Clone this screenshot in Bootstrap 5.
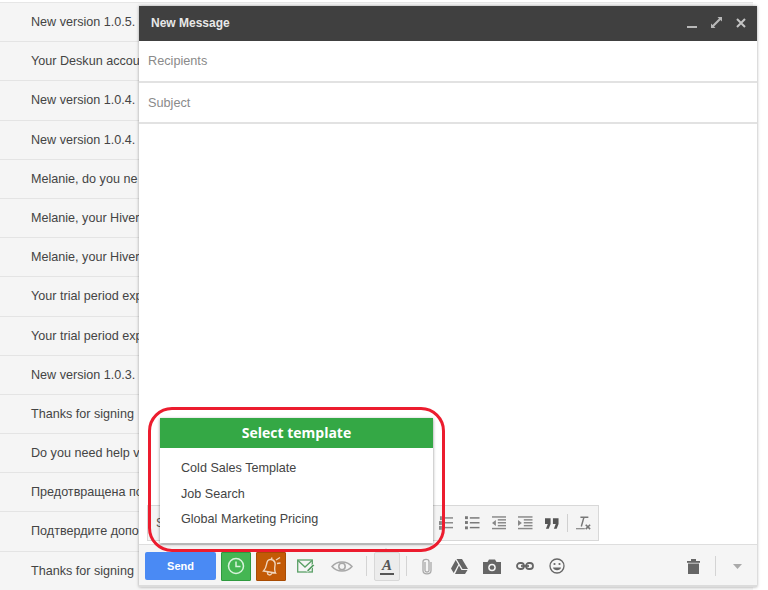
<!DOCTYPE html>
<html lang="en">
<head>
<meta charset="UTF-8">
<meta name="viewport" content="width=device-width, initial-scale=1">
<title>New Message</title>
<link href="https://cdn.jsdelivr.net/npm/bootstrap@5.3.0/dist/css/bootstrap.min.css" rel="stylesheet">
<style>
html, body { height: 590px; overflow: hidden; }
body { background: #fff; font-family: "Liberation Sans", Arial, sans-serif; font-size: 12.6px; color: #444; position: relative; }
.mail-list { width: 753px; border-top: 1px solid #e6e6e6; margin-top: 2px; background: #f5f5f5; height: 590px; }
.mail-row { height: 39.2px; line-height: 38px; padding-left: 31px; border-bottom: 1px solid #e4e4e4; color: #444; white-space: nowrap; }
.compose-win { position: absolute; left: 139px; top: 6px; width: 618px; height: 581px; background: #fff; box-shadow: 0 0 3px rgba(0,0,0,.35); }
.compose-head { height: 35px; background: #404040; color: #e8e8e8; font-size: 12px; font-weight: 700; padding: 0 11px 2px 12px; }
.head-tools { gap: 14px; }
.compose-field { height: 41.5px; padding: 2px 0 0 9px; border-bottom: 2px solid #e2e2e2; color: #8a8a8a; font-size: 12.7px; }
.compose-body { flex: 1 1 auto; }
.fmt-bar { position: absolute; left: 8px; top: 499px; width: 452px; height: 36px; background: #f4f4f4; border: 1px solid #d8d8d8; }
.fmt-letter { padding-left: 8px; color: #555; font-size: 12px; }
.fmt-tools { gap: 12.100px; padding-right: 7px; }
.fmt-sep { width: 1px; height: 18px; background: #d0d0d0; margin: 0 -4.100px; }
.compose-foot { height: 43px; background: #f5f5f5; border-top: 1px solid #dedede; border-bottom: 2px solid #dcdcdc; padding: 7px 10px 0 6px; }
.foot-row { height: 28px; }
.send-btn { width: 71px; height: 28px; background: #4a8af4; color: #fff; font-size: 11px; font-weight: 700; border: 0; border-radius: 2px; padding: 0; }
.sq-btn { width: 30px; height: 29px; margin-left: 5px; border-radius: 1px; }
.sq-green { background: #45b653; border: 1px solid #2f9a3f; }
.sq-orange { background: #c35a06; border: 1px solid #a84c04; }
.foot-sep { width: 1px; height: 20px; background: #d4d4d4; flex-shrink: 0; }
.sep-a { margin-left: 8px; }
.sep-b { margin-left: 6px; }
.sep-c { margin-left: 12px; }
.fmt-toggle { width: 26px; height: 29px; margin-left: 7px; background: #ececec; border: 1px solid #d8d8d8; border-radius: 2px; position: relative; }
.fmt-toggle::before { content: ""; position: absolute; left: 7px; top: -5px; border: 4px solid transparent; border-top: 0; border-bottom: 4px solid #d0d0d0; }
.fmt-a { font-family: "Liberation Serif", serif; font-style: italic; font-weight: 700; font-size: 15px; line-height: 15px; color: #555; border-bottom: 2px solid #555; padding: 0 2px; }
.tool-slot { width: 20px; height: 28px; margin-left: 12.500px; flex-shrink: 0; }
.slot-env { width: 22px; margin-left: 9px; }
.slot-eye { width: 32px; margin-left: 9px; }
.slot-clip { margin-left: 10px; }
.slot-arrow { margin-left: 11px; }
.slot-trash { margin-left: auto; }
.tpl-menu { position: absolute; left: 21px; top: 412px; width: 273px; height: 125px; background: #fff; box-shadow: 0 1px 3px rgba(0,0,0,.45); z-index: 3; }
.tpl-head { height: 30px; padding-bottom: 2px; background: #34a845; color: #fff; font-family: "Open Sans", sans-serif; font-weight: 700; font-size: 14px; }
.tpl-item { height: 25.500px; line-height: 25.500px; padding-left: 21px; color: #444; }
.tpl-items { padding-top: 8px; }
.red-ring { position: absolute; left: 148px; top: 407px; width: 297px; height: 145px; border: 3px solid #ec1c2e; border-radius: 24px; z-index: 4; pointer-events: none; }
</style>
</head>
<body>

<div class="mail-list">
    <div class="mail-row">New version 1.0.5.</div>
    <div class="mail-row">Your Deskun accou</div>
    <div class="mail-row">New version 1.0.4.</div>
    <div class="mail-row">New version 1.0.4.</div>
    <div class="mail-row">Melanie, do you ne</div>
    <div class="mail-row">Melanie, your Hiver</div>
    <div class="mail-row">Melanie, your Hiver</div>
    <div class="mail-row">Your trial period exp</div>
    <div class="mail-row">Your trial period exp</div>
    <div class="mail-row">New version 1.0.3.</div>
    <div class="mail-row">Thanks for signing</div>
    <div class="mail-row">Do you need help v</div>
    <div class="mail-row">Предотвращена по</div>
    <div class="mail-row">Подтвердите допо.</div>
    <div class="mail-row">Thanks for signing</div>
</div>

<div class="compose-win d-flex flex-column">
    <div class="compose-head d-flex align-items-center justify-content-between flex-shrink-0">
        <span>New Message</span>
        <span class="head-tools d-flex align-items-center">
            <svg width="10" height="12" viewBox="0 0 10 12"><rect y="9" width="10" height="2" fill="#b8b8b8"/></svg>
            <svg width="11" height="11" viewBox="0 0 11 11" fill="#b8b8b8"><path d="M6.500 0H11V4.500L9.500 3 3 9.500 4.500 11H0V6.500L1.500 8 8 1.500Z"/></svg>
            <svg width="10" height="10" viewBox="0 0 10 10" stroke="#c4c4c4" stroke-width="2"><path d="M1 1L9 9M9 1L1 9"/></svg>
        </span>
    </div>
    <div class="compose-field d-flex align-items-center flex-shrink-0">Recipients</div>
    <div class="compose-field d-flex align-items-center flex-shrink-0">Subject</div>
    <div class="compose-body"></div>

    <div class="fmt-bar d-flex align-items-center justify-content-between">
        <span class="fmt-letter">S</span>
        <span class="fmt-tools d-flex align-items-center">
            <svg width="14.500" height="14" viewBox="0 0 15 14" fill="#888"><rect x="5" y="1" width="10" height="1.500"/><rect x="5" y="6" width="10" height="1.500"/><rect x="5" y="11" width="10" height="1.500"/><rect x="1" y="0" width="2" height="4"/><rect x="0" y="5" width="3" height="4"/><rect x="0" y="10" width="3" height="4"/></svg>
            <svg width="14.500" height="14" viewBox="0 0 15 14" fill="#777"><rect x="5" y="1" width="10" height="1.500"/><rect x="5" y="6" width="10" height="1.500"/><rect x="5" y="11" width="10" height="1.500"/><rect y="0" width="3" height="3"/><rect y="5" width="3" height="3"/><rect y="10.500" width="3" height="3"/></svg>
            <svg width="14.500" height="14" viewBox="0 0 15 14" fill="#888"><rect width="15" height="1.500"/><rect x="6" y="3" width="9" height="1.500"/><rect x="6" y="6" width="9" height="1.500"/><rect x="6" y="9" width="9" height="1.500"/><rect y="12" width="15" height="1.500"/><path d="M4 4V10L0 7Z"/></svg>
            <svg width="14.500" height="14" viewBox="0 0 15 14" fill="#888"><rect width="15" height="1.500"/><rect x="6" y="3" width="9" height="1.500"/><rect x="6" y="6" width="9" height="1.500"/><rect x="6" y="9" width="9" height="1.500"/><rect y="12" width="15" height="1.500"/><path d="M0 4V10L4 7Z"/></svg>
            <svg width="14" height="11" viewBox="0 0 15 11" fill="#555"><path d="M0 0H6V6L4 11H1L3 6H0ZM8.500 0H14.500V6L12.500 11H9.500L11.500 6H8.500Z"/></svg>
            <span class="fmt-sep"></span>
            <svg width="15" height="16" viewBox="0 0 17 16" fill="none" stroke="#777"><path d="M5 1.500H14M9 1.500L6 12" stroke-width="1.600"/><path d="M0 14.500H10" stroke-width="1.200"/><path d="M11 10L16 15M16 10L11 15" stroke-width="1.800"/></svg>
        </span>
    </div>

    <div class="tpl-menu">
        <div class="tpl-head d-flex align-items-center justify-content-center">Select template</div>
        <div class="tpl-items">
            <div class="tpl-item">Cold Sales Template</div>
            <div class="tpl-item">Job Search</div>
            <div class="tpl-item">Global Marketing Pricing</div>
        </div>
    </div>

    <div class="compose-foot flex-shrink-0">
        <div class="foot-row d-flex align-items-center">
            <button class="send-btn flex-shrink-0" type="button">Send</button>
            <span class="sq-btn sq-green d-flex align-items-center justify-content-center flex-shrink-0">
                <svg width="18" height="18" viewBox="0 0 18 18" fill="none" stroke="#d8f3dc" stroke-width="1.500"><circle cx="9" cy="9" r="7.500"/><path d="M9 4.500V9.500H13.500"/></svg>
            </span>
            <span class="sq-btn sq-orange d-flex align-items-center justify-content-center flex-shrink-0">
                <svg width="20" height="20" viewBox="0 0 20 20" fill="none" stroke="#f0d5bd" stroke-width="1.400"><path d="M10 3.500C7 3 6 5.500 5.500 8.500C5 11.500 4 13.500 2.500 15L14.500 17C13.500 15 13.500 12.500 14 9.500C14.500 6.500 13 4 10 3.500ZM6.500 16C6 19.500 10 20 10.800 16.800M10.500 3.300L11 1.500M15 4L19 1.500M16 7.500L19.500 7"/></svg>
            </span>
            <span class="tool-slot slot-env d-flex align-items-center justify-content-center">
                <svg width="18" height="15" viewBox="0 0 18 15" fill="none" stroke="#5aa066" stroke-width="1.300"><rect x=".7" y="1" width="14.600" height="12"/><path d="M1 1.500L8 8L15 1.500"/><path d="M10 11L16 5L17.500 6.500L11.500 12.500L10 13Z" fill="#5aa066" stroke="#f5f5f5" stroke-width=".6"/></svg>
            </span>
            <span class="tool-slot slot-eye d-flex align-items-center justify-content-center">
                <svg width="22" height="13" viewBox="0 0 22 13" fill="none" stroke="#a8a8a8" stroke-width="1.500"><path d="M1 6.500C6 .5 16 .5 21 6.500C16 12.500 6 12.500 1 6.500Z"/><circle cx="11" cy="6.500" r="3.200"/></svg>
            </span>
            <span class="foot-sep sep-a"></span>
            <span class="fmt-toggle d-flex align-items-center justify-content-center flex-shrink-0"><span class="fmt-a">A</span></span>
            <span class="foot-sep sep-b"></span>
            <span class="tool-slot slot-clip d-flex align-items-center justify-content-center">
                <svg width="12" height="17" viewBox="0 0 12 17" fill="none" stroke="#a8a8a8" stroke-width="1.300"><path d="M4 4V12.500C4 14.500 8 14.500 8 12.500V3.500C8 .7 2 .7 2 3.500V12.500C2 17 10 17 10 12.500V4"/></svg>
            </span>
            <span class="tool-slot d-flex align-items-center justify-content-center">
                <svg width="17" height="15" viewBox="0 0 17 15" fill="#666"><path d="M5.500 0H11L17 10H11.500ZM4.700 1L7.300 5.500 2.700 14 0 9.500ZM8 6.500L10.500 11H16.500L14 15H4Z"/></svg>
            </span>
            <span class="tool-slot d-flex align-items-center justify-content-center">
                <svg width="18" height="15" viewBox="0 0 18 15"><path d="M0 3H4.500L6 .5H12L13.500 3H18V15H0Z" fill="#666"/><circle cx="9" cy="8.500" r="3.800" fill="#f5f5f5"/><circle cx="9" cy="8.500" r="2.300" fill="#666"/></svg>
            </span>
            <span class="tool-slot d-flex align-items-center justify-content-center">
                <svg width="18" height="8" viewBox="0 0 18 8" fill="none" stroke="#666" stroke-width="1.800"><rect x="1" y="1" width="7" height="6" rx="3"/><rect x="10" y="1" width="7" height="6" rx="3"/><path d="M5 4H13"/></svg>
            </span>
            <span class="tool-slot d-flex align-items-center justify-content-center">
                <svg width="16" height="16" viewBox="0 0 16 16" fill="none" stroke="#666" stroke-width="1.300"><circle cx="8" cy="8" r="7"/><circle cx="5.500" cy="6" r="1.100" fill="#666" stroke="none"/><circle cx="10.500" cy="6" r="1.100" fill="#666" stroke="none"/><path d="M4 9.500H12C11.500 13 4.500 13 4 9.500Z" fill="#666" stroke="none"/></svg>
            </span>
            <span class="tool-slot slot-trash d-flex align-items-center justify-content-center">
                <svg width="13" height="15" viewBox="0 0 13 15" fill="#666"><rect y="2" width="13" height="1.800"/><rect x="4" y="0" width="5" height="2"/><path d="M1 4.500H12V15H1Z"/></svg>
            </span>
            <span class="foot-sep sep-c"></span>
            <span class="tool-slot slot-arrow d-flex align-items-center justify-content-center">
                <svg width="9" height="5" viewBox="0 0 9 5" fill="#aaa"><path d="M0 0H9L4.500 5Z"/></svg>
            </span>
        </div>
    </div>
</div>

<div class="red-ring"></div>

<script src="https://cdn.jsdelivr.net/npm/bootstrap@5.3.0/dist/js/bootstrap.bundle.min.js"></script>
</body>
</html>
